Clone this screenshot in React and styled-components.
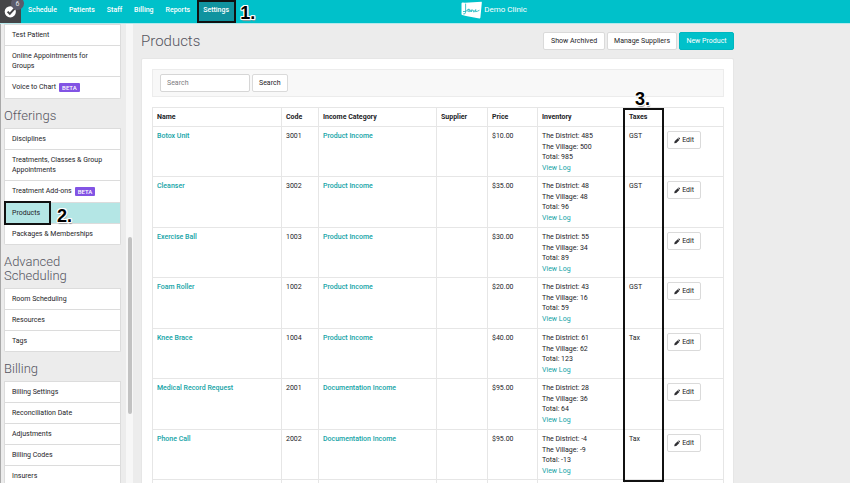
import React from "react";
import styled, { createGlobalStyle, css } from "styled-components";

const GlobalStyle = createGlobalStyle`
  *, *::before, *::after { box-sizing: border-box; }
  body {
    margin: 0;
    background: #ececec;
    color: #232327;
    font-family: Roboto, "Liberation Sans", sans-serif;
    font-size: 7px;
    line-height: 1.5;
  }
  h1, h2, ul { margin: 0; padding: 0; font-weight: 300; }
  ul { list-style: none; font-weight: 400; }
  a { color: inherit; text-decoration: none; }
  button, input { font: inherit; color: inherit; }
`;

const Page = styled.div`
  height: 100vh;
  display: flex;
  flex-direction: column;
  overflow: hidden;
`;

/* Header */
const Header = styled.header`
  flex: none;
  display: flex;
  height: 24px;
  background: #00c1ca;
  border-bottom: 1px solid #b5e9ec;
  color: #fff;
`;
const Home = styled.a`
  position: relative;
  width: 21px;
  display: flex;
  align-items: center;
  justify-content: center;
  background: #454547;
`;
const Count = styled.span`
  position: absolute;
  top: -3px;
  left: 11px;
  width: 13px;
  height: 13px;
  border-radius: 50%;
  background: #5b5b6b;
  color: #e4e4ea;
  line-height: 14px;
  text-align: center;
`;
const Nav = styled.nav`
  display: flex;
  padding-left: 1px;
`;
const NavLink = styled.a`
  position: relative;
  padding: 0 6px;
  line-height: 20px;
  font-weight: 500;
  ${(p) =>
    p.$active &&
    css`
      margin-left: 1px;
      background: #10939f;
      border: 2px solid #111;
      padding: 0 5px 0 4px;
      line-height: 16px;
    `}
`;
const Brand = styled.a`
  display: flex;
  align-items: flex-start;
  gap: 2px;
  margin-left: auto;
  margin-right: 38%;
  font-size: 8px;
  font-weight: 400;
  line-height: 20px;
`;

/* Numbered call-outs */
const Step = styled.strong`
  position: absolute;
  z-index: 2;
  color: #000;
  font-family: "Liberation Sans", sans-serif;
  font-size: 18px;
  font-weight: 700;
  line-height: 16px;
  text-shadow: 1px 0 #fff, -1px 0 #fff, 0 1px #fff, 0 -1px #fff, 1px 1px #fff,
    -1px -1px #fff, 1px -1px #fff, -1px 1px #fff, 1px 2px 1px #999;
`;
const NavStep = styled(Step)`
  top: 3px;
  left: 41px;
`;
const MenuStep = styled(Step)`
  top: 5px;
  left: 52px;
`;
const ColumnStep = styled(Step)`
  top: -17px;
  left: 10px;
`;
const MenuFrame = styled.span`
  position: absolute;
  z-index: 1;
  top: -2px;
  bottom: -2px;
  left: -1px;
  width: 47px;
  border: 2px solid #111;
`;
const ColumnFrame = styled.span`
  position: absolute;
  z-index: 1;
  top: 0;
  left: -2px;
  right: -2px;
  height: 374px;
  border: 2px solid #111;
`;

/* Sidebar */
const Body = styled.div`
  flex: 1;
  min-height: 0;
  display: flex;
`;
const Sidebar = styled.aside`
  flex: none;
  display: flex;
  width: 133px;
  border-left: 1px solid #a9a9a9;
  overflow: hidden;
`;
const Menus = styled.div`
  flex: 1;
  padding: 0 5px 0 3px;
  height: 0;
`;
const MenuTitle = styled.h2`
  margin: 10px 0 5px;
  color: #55555f;
  font-size: 13px;
  line-height: 14px;
`;
const Menu = styled.ul`
  background: #fff;
  border: 1px solid #dcdcdc;
  border-top: 0;
  border-radius: 0 0 2px 2px;
`;
const MenuItem = styled.li`
  position: relative;
  border-top: 1px solid #dcdcdc;
  background: ${(p) => (p.$active ? "#b4e6e5" : "#fff")};
`;
const MenuLink = styled.a`
  display: block;
  padding: 5px 12px 5px 7px;
  line-height: ${(p) => (p.$tagged ? 11 : 10)}px;
`;
const Beta = styled.span`
  display: inline-block;
  margin-left: 3px;
  padding: 0 3px;
  border-radius: 1px;
  background: #8254e4;
  color: #fff;
  font-size: 6px;
  font-weight: 500;
  line-height: 9px;
  vertical-align: top;
  margin-top: 1px;
`;
const Track = styled.div`
  width: 7px;
  padding: 213px 1px 0 2px;
  background: #f7f7f7;
`;
const Thumb = styled.div`
  height: 177px;
  border-radius: 2px;
  background: #c2c2c2;
`;

/* Main */
const Main = styled.main`
  flex: 1;
  min-width: 0;
  padding: 8px 9px 0 8px;
`;
const Content = styled.div`
  max-width: 593px;
`;
const TitleBar = styled.div`
  display: flex;
  align-items: center;
  gap: 2px;
  height: 18px;
  margin-bottom: 8px;
`;
const Title = styled.h1`
  flex: 1;
  color: #55555f;
  font-size: 15px;
  line-height: 18px;
`;
const Button = styled.button`
  height: 18px;
  padding: 0 6px;
  border: 1px solid ${(p) => (p.$primary ? "#00b7c0" : "#dadada")};
  border-radius: 2px;
  background: ${(p) => (p.$primary ? "#00c1ca" : "#fff")};
  color: ${(p) => (p.$primary ? "#fff" : "inherit")};
  line-height: 16px;
  white-space: nowrap;
`;
const ActionButton = styled(Button)`
  min-width: ${(p) => (p.$primary ? 55 : 62)}px;
`;
const Panel = styled.section`
  padding: 10px 9px 10px 10px;
  border: 1px solid #e6e6e6;
  border-radius: 2px;
  background: #fff;
`;
const SearchForm = styled.form`
  display: flex;
  gap: 2px;
  margin-bottom: 10px;
  padding: 4px 7px;
  border: 1px solid #ececec;
  background: #f8f8f8;
`;
const SearchInput = styled.input`
  width: 90px;
  height: 18px;
  padding: 0 6px;
  border: 1px solid #d6d6d6;
  border-radius: 2px;
  background: #fff;
  &::placeholder { color: #7c7c80; opacity: 1; }
`;

const Table = styled.table`
  width: 100%;
  table-layout: fixed;
  border-collapse: separate;
  border-spacing: 0;
  border: solid #e6e6e6;
  border-width: 1px 0 0 1px;
`;
const Col = styled.col`
  width: ${(p) => (p.$w ? `${p.$w}px` : "auto")};
`;
const Th = styled.th`
  position: relative;
  height: 19px;
  padding: 0 4px;
  border: solid #e6e6e6;
  border-width: 0 1px 1px 0;
  text-align: left;
  font-weight: 700;
  line-height: 10px;
`;
const Row = styled.tr`
  height: 50px;
  &:nth-child(even) { height: 51px; }
`;
const Td = styled.td`
  padding: 4px 4px 3px;
  border: solid #e6e6e6;
  border-width: 0 1px 1px 0;
  vertical-align: top;
`;
const Link = styled.a`
  color: #14a3a6;
  font-weight: ${(p) => (p.$plain ? 400 : 500)};
`;
const Line = styled.div``;
const EditButton = styled(Button)`
  display: flex;
  align-items: center;
  gap: 2px;
  width: 34px;
`;

function CheckLogo() {
  return (
    <svg width="13" height="13" viewBox="0 0 13 13" aria-hidden="true">
      <circle cx="6.3" cy="6.8" r="5.6" fill="#fff" />
      <path d="M3.6 6.6l2.2 2.3L11 3.2" fill="none" stroke="#454547" strokeWidth="2" />
    </svg>
  );
}
function JaneLogo() {
  return (
    <svg width="21" height="19" viewBox="0 0 21 19" role="img" aria-label="Jane">
      <path d="M0.5 3.5Q0.6 2.6 1.6 2.6L4 2.7 20.6 1.8Q21 2 20.8 3L19.4 17.6Q19.3 18.6 18.4 18.4L5 16 1.2 15Q0.5 14.8 0.5 14z" fill="#fff" />
      <path d="M4.6 4v8.2q-.2 2.4-2 1.8M2.4 11.6q3 .6 4-1.6.4-1.2 1.6-.8M8.4 9.4q-2 .2-1.8 1.8.8 1.2 2-.8v1.3q1 .2 1.6-2v2.2q1-2.4 1.8-2t.3 2q1.4.3 2-1.2 1-.2 .8-.9-1.1-.4-1.2 1 .2 1.6 2.6.4l1.6-.8" fill="none" stroke="#12b4bd" strokeWidth="0.8" strokeLinecap="round" />
    </svg>
  );
}
function Pencil() {
  return (
    <svg width="7" height="7" viewBox="0 0 14 14" fill="#2f2f33" aria-hidden="true">
      <path d="M0.5 13.5l1-4.6 7-7 3.7 3.7-7 7zM9.4 1.2l1-.9q.7-.5 1.4.1l2 2q.6.7 0 1.3l-.9 1z" />
    </svg>
  );
}

const NAV = ["Schedule", "Patients", "Staff", "Billing", "Reports", "Settings"];
const MENUS = [
  { items: ["Test Patient", "Online Appointments for Groups", "Voice to Chart"] },
  {
    title: "Offerings",
    items: [
      "Disciplines",
      "Treatments, Classes & Group Appointments",
      "Treatment Add-ons",
      "Products",
      "Packages & Memberships",
    ],
  },
  { title: "Advanced Scheduling", items: ["Room Scheduling", "Resources", "Tags"] },
  {
    title: "Billing",
    items: ["Billing Settings", "Reconciliation Date", "Adjustments", "Billing Codes", "Insurers"],
  },
];
const BETA = ["Voice to Chart", "Treatment Add-ons"];
const COLUMNS = [
  ["Name"],
  ["Code", 37],
  ["Income Category", 118],
  ["Supplier", 51],
  ["Price", 50],
  ["Inventory", 87],
  ["Taxes", 38],
  ["", 61],
];
const PRODUCTS = [
  ["Botox Unit", "3001", "Product Income", "$10.00", 485, 500, 985, "GST"],
  ["Cleanser", "3002", "Product Income", "$35.00", 48, 48, 96, "GST"],
  ["Exercise Ball", "1003", "Product Income", "$30.00", 55, 34, 89, ""],
  ["Foam Roller", "1002", "Product Income", "$20.00", 43, 16, 59, "GST"],
  ["Knee Brace", "1004", "Product Income", "$40.00", 61, 62, 123, "Tax"],
  ["Medical Record Request", "2001", "Documentation Income", "$95.00", 28, 36, 64, ""],
  ["Phone Call", "2002", "Documentation Income", "$95.00", -4, -9, -13, "Tax"],
];

export default function App() {
  return (
    <Page>
      <GlobalStyle />
      <Header>
        <Home href="#" aria-label="Home">
          <CheckLogo />
          <Count>6</Count>
        </Home>
        <Nav>
          {NAV.map((name) => (
            <NavLink key={name} href="#" $active={name === "Settings"}>
              {name}
              {name === "Settings" && <NavStep>1.</NavStep>}
            </NavLink>
          ))}
        </Nav>
        <Brand href="#">
          <JaneLogo />
          Demo Clinic
        </Brand>
      </Header>
      <Body>
        <Sidebar>
          <Menus>
            {MENUS.map((menu, i) => (
              <React.Fragment key={i}>
                {menu.title && <MenuTitle>{menu.title}</MenuTitle>}
                <Menu>
                  {menu.items.map((item) => (
                    <MenuItem key={item} $active={item === "Products"}>
                      <MenuLink href="#" $tagged={BETA.includes(item)}>
                        {item}
                        {BETA.includes(item) && <Beta>BETA</Beta>}
                      </MenuLink>
                      {item === "Products" && (
                        <>
                          <MenuFrame />
                          <MenuStep>2.</MenuStep>
                        </>
                      )}
                    </MenuItem>
                  ))}
                </Menu>
              </React.Fragment>
            ))}
          </Menus>
          <Track>
            <Thumb />
          </Track>
        </Sidebar>
        <Main>
          <Content>
            <TitleBar>
              <Title>Products</Title>
              <ActionButton>Show Archived</ActionButton>
              <ActionButton>Manage Suppliers</ActionButton>
              <ActionButton $primary>New Product</ActionButton>
            </TitleBar>
            <Panel>
              <SearchForm onSubmit={(e) => e.preventDefault()}>
                <SearchInput type="search" aria-label="Search products" placeholder="Search" />
                <Button>Search</Button>
              </SearchForm>
              <Table>
                <colgroup>
                  {COLUMNS.map(([name, width]) => (
                    <Col key={name} $w={width} />
                  ))}
                </colgroup>
                <thead>
                  <tr>
                    {COLUMNS.map(([name]) => (
                      <Th key={name} scope="col">
                        {name}
                        {name === "Taxes" && (
                          <>
                            <ColumnFrame />
                            <ColumnStep>3.</ColumnStep>
                          </>
                        )}
                      </Th>
                    ))}
                  </tr>
                </thead>
                <tbody>
                  {PRODUCTS.map(([name, code, income, price, district, village, total, tax]) => (
                    <Row key={name}>
                      <Td><Link href="#">{name}</Link></Td>
                      <Td>{code}</Td>
                      <Td><Link href="#">{income}</Link></Td>
                      <Td />
                      <Td>{price}</Td>
                      <Td>
                        <Line>The District: {district}</Line>
                        <Line>The Village: {village}</Line>
                        <Line>Total: {total}</Line>
                        <Link href="#" $plain>View Log</Link>
                      </Td>
                      <Td>{tax}</Td>
                      <Td>
                        <EditButton><Pencil />Edit</EditButton>
                      </Td>
                    </Row>
                  ))}
                  <Row>
                    {COLUMNS.map(([name]) => (
                      <Td key={name} />
                    ))}
                  </Row>
                </tbody>
              </Table>
            </Panel>
          </Content>
        </Main>
      </Body>
    </Page>
  );
}
